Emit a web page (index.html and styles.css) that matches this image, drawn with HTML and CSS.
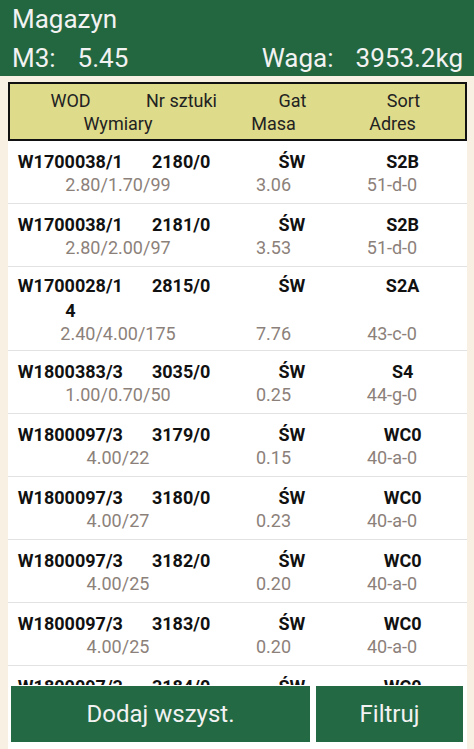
FILE: index.html
```html
<!DOCTYPE html>
<html lang="pl">
<head>
  <meta charset="UTF-8" />
  <title>Magazyn</title>
  <link rel="stylesheet" href="styles.css">
</head>
<body>
  <div class="app">
    <div class="topbar">
      <div class="title">Magazyn</div>
      <div class="totals">
        <div class="total"><span>M3:</span><span>5.45</span></div>
        <div class="total"><span>Waga:</span><span>3953.2kg</span></div>
      </div>
    </div>

    <div class="content">
      <div class="list-head">
        <div class="line4">
          <span>WOD</span>
          <span>Nr sztuki</span>
          <span>Gat</span>
          <span>Sort</span>
        </div>
        <div class="line3">
          <span>Wymiary</span>
          <span>Masa</span>
          <span>Adres</span>
        </div>
      </div>

      <ul class="items" id="items"></ul>

      <div class="actions">
        <button class="btn-wide">Dodaj wszyst.</button>
        <button class="btn-narrow">Filtruj</button>
      </div>
    </div>
  </div>

  <script>
    const items = [
      ["W1700038/1", "2180/0", "ŚW", "S2B", "2.80/1.70/99", "3.06", "51-d-0"],
      ["W1700038/1", "2181/0", "ŚW", "S2B", "2.80/2.00/97", "3.53", "51-d-0"],
      ["W1700028/14", "2815/0", "ŚW", "S2A", "2.40/4.00/175", "7.76", "43-c-0"],
      ["W1800383/3", "3035/0", "ŚW", "S4", "1.00/0.70/50", "0.25", "44-g-0"],
      ["W1800097/3", "3179/0", "ŚW", "WC0", "4.00/22", "0.15", "40-a-0"],
      ["W1800097/3", "3180/0", "ŚW", "WC0", "4.00/27", "0.23", "40-a-0"],
      ["W1800097/3", "3182/0", "ŚW", "WC0", "4.00/25", "0.20", "40-a-0"],
      ["W1800097/3", "3183/0", "ŚW", "WC0", "4.00/25", "0.20", "40-a-0"],
      ["W1800097/3", "3184/0", "ŚW", "WC0", "4.00/25", "0.20", "40-a-0"]
    ];

    const list = document.getElementById("items");

    items.forEach((item) => {
      const li = document.createElement("li");
      li.className = "item";

      const top = document.createElement("div");
      top.className = "line4 item-top";
      item.slice(0, 4).forEach((text) => {
        const span = document.createElement("span");
        span.textContent = text;
        top.appendChild(span);
      });

      const bottom = document.createElement("div");
      bottom.className = "line3 item-bottom";
      item.slice(4).forEach((text) => {
        const span = document.createElement("span");
        span.textContent = text;
        bottom.appendChild(span);
      });

      li.appendChild(top);
      li.appendChild(bottom);
      list.appendChild(li);
    });
  </script>
</body>
</html>
```

FILE: styles.css
```css
* {
  box-sizing: border-box;
}

html,
body {
  height: 100%;
}

body {
  margin: 0;
  background-color: #f7f0e3;
  font-family: Roboto, "Noto Sans", sans-serif;
  color: #111;
}

.app {
  display: flex;
  flex-direction: column;
  height: 100vh;
}

/* zielony pasek u góry */
.topbar {
  background-color: #22673f;
  color: #f2f2f2;
  height: 76px;
  padding: 3px 11px 0 12px;
  font-size: 26px;
}

.title {
  line-height: 32px;
}

.totals {
  display: flex;
  justify-content: space-between;
  margin-top: 5px;
  line-height: 36px;
}

.total {
  display: flex;
  gap: 22px;
}

.content {
  flex: 1;
  display: flex;
  flex-direction: column;
  min-height: 0;
  margin: 6px 7px 0 8px;
}

.list-head {
  background-color: #dedb8b;
  border: 2px solid #111;
  height: 59px;
  padding: 5px 6px 0 5px;
  font-size: 18px;
  line-height: 23px;
  color: #222;
}

/* 4 kolumny w pierwszej linii, 3 w drugiej */
.line4 {
  display: grid;
  grid-template-columns: repeat(4, 1fr);
  text-align: center;
}

.line3 {
  display: grid;
  grid-template-columns: 206px 105px 1fr;
  text-align: center;
}

.items {
  flex: 1;
  min-height: 0;
  overflow: hidden;
  list-style-type: none;
  margin: 0;
  padding: 0;
  background-color: white;
}

.item {
  display: flex;
  flex-direction: column;
  justify-content: center;
  min-height: 63px;
  padding: 6px 9px 6px 7px;
  border-bottom: 1px solid #e2e2e2;
  font-size: 18px;
}

.item-top {
  font-weight: bold;
  line-height: 25px;
  color: #111;
}

.item-top span {
  word-break: break-all;
}

.item-bottom {
  line-height: 21px;
  color: #8c817a;
}

.actions {
  display: flex;
  gap: 6px;
  background-color: white;
  padding: 1px 4px 7px 3px;
}

.actions button {
  height: 56px;
  border: none;
  border-radius: 0;
  background-color: #236a44;
  color: #f2f2f2;
  font-family: Roboto, "Noto Sans", sans-serif;
  font-size: 24px;
  cursor: pointer;
}

.btn-wide {
  width: 299px;
}

.btn-narrow {
  flex: 1;
}
```
